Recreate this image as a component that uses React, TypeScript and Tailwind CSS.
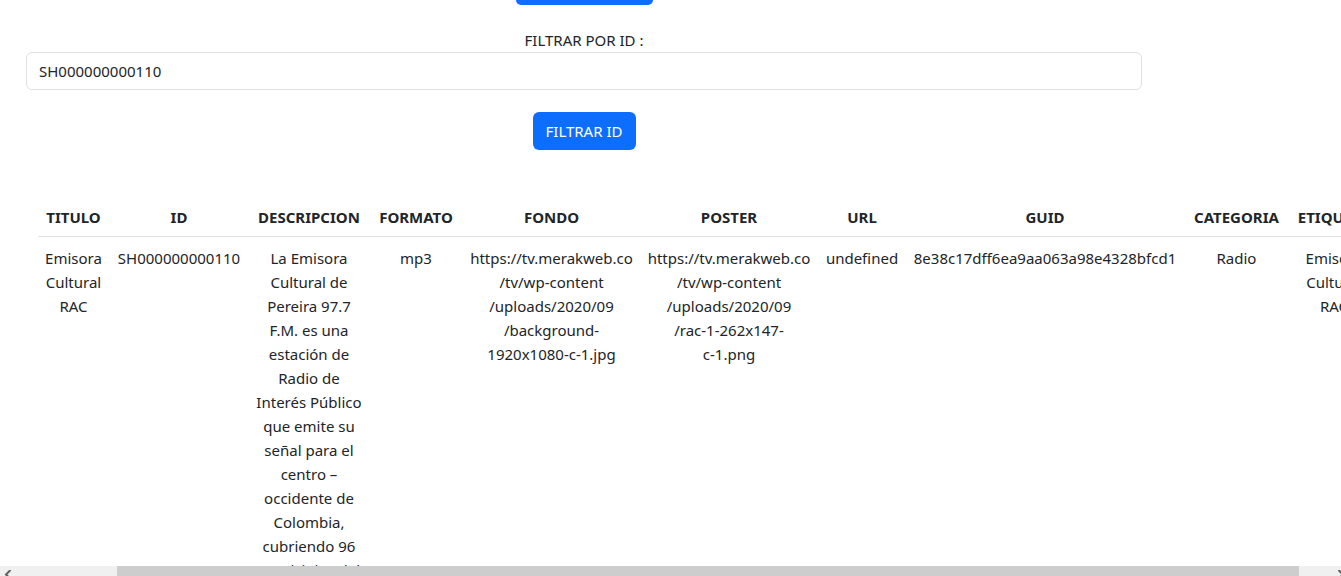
import React from "react";

type Column = { title: string; width: string; value: string };

const columns: Column[] = [
  { title: "TITULO", width: "w-[71px]", value: "Emisora\nCultural\nRAC" },
  { title: "ID", width: "w-[140px]", value: "SH000000000110" },
  {
    title: "DESCRIPCION",
    width: "w-[120px]",
    value:
      "La Emisora\nCultural de\nPereira 97.7\nF.M. es una\nestación de\nRadio de\nInterés Público\nque emite su\nseñal para el\ncentro –\noccidente de\nColombia,\ncubriendo 96\nmunicipios del",
  },
  { title: "FORMATO", width: "w-[94px]", value: "mp3" },
  {
    title: "FONDO",
    width: "w-[177px]",
    value:
      "https://tv.merakweb.co\n/tv/wp-content\n/uploads/2020/09\n/background-\n1920x1080-c-1.jpg",
  },
  {
    title: "POSTER",
    width: "w-[178px]",
    value:
      "https://tv.merakweb.co\n/tv/wp-content\n/uploads/2020/09\n/rac-1-262x147-\nc-1.png",
  },
  { title: "URL", width: "w-[88px]", value: "undefined" },
  { title: "GUID", width: "w-[278px]", value: "8e38c17dff6ea9aa063a98e4328bfcd1" },
  { title: "CATEGORIA", width: "w-[105px]", value: "Radio" },
  { title: "ETIQUETA", width: "w-[90px]", value: "Emisora\nCultural\nRAC" },
];

function FilterForm() {
  return (
    <form
      className="ml-[26px] mr-[199px] flex flex-col items-center"
      onSubmit={(e) => e.preventDefault()}
    >
      <button
        type="button"
        aria-label="Filtrar"
        className="h-[5px] w-[137px] rounded-b-md bg-[#0d6efd]"
      />
      <label htmlFor="filter-id" className="mt-[23px]">
        FILTRAR POR ID :
      </label>
      <input
        id="filter-id"
        type="text"
        defaultValue="SH000000000110"
        className="h-[38px] w-full rounded-md border border-[#dee2e6] bg-white px-3 outline-none"
      />
      <button
        type="submit"
        className="mt-[22px] h-[38px] w-[103px] rounded-md bg-[#0d6efd] text-white"
      >
        FILTRAR ID
      </button>
    </form>
  );
}

function ResultsTable() {
  return (
    <table className="ml-[38px] mt-[46px] w-[1341px] table-fixed border-collapse text-center">
      <thead>
        <tr className="border-b border-[#dee2e6]">
          {columns.map((c) => (
            <th
              key={c.title}
              scope="col"
              className={`${c.width} whitespace-nowrap pt-[9px] pb-[7px] font-bold`}
            >
              {c.title}
            </th>
          ))}
        </tr>
      </thead>
      <tbody>
        <tr>
          {columns.map((c) => (
            <td key={c.title} className="whitespace-pre pt-[9px] pb-[7px] align-top">
              {c.value}
            </td>
          ))}
        </tr>
      </tbody>
    </table>
  );
}

function ScrollBar() {
  return (
    <div className="flex h-[10px] shrink-0 overflow-hidden bg-[#f0f0f0]" aria-hidden="true">
      <div className="w-[117px] shrink-0">
        <svg className="ml-[4px] mt-[4px]" width="8" height="10" viewBox="0 0 8 10">
          <path d="M6.5 0 L2 4.5 L6.5 9" fill="none" stroke="#606060" strokeWidth="2" />
        </svg>
      </div>
      <div className="grow bg-[#cdcdcd]" />
      <div className="flex w-[42px] shrink-0 justify-end">
        <svg className="mt-[4px]" width="3" height="10" viewBox="0 0 3 10">
          <path d="M0.5 0 L5 4.5 L0.5 9" fill="none" stroke="#606060" strokeWidth="2" />
        </svg>
      </div>
    </div>
  );
}

export default function App() {
  return (
    <div className="flex h-screen flex-col overflow-hidden bg-white font-['Noto_Sans',sans-serif] text-[15px] leading-[24px] text-[#212529]">
      <main className="min-h-0 grow overflow-hidden">
        <FilterForm />
        <ResultsTable />
      </main>
      <ScrollBar />
    </div>
  );
}
